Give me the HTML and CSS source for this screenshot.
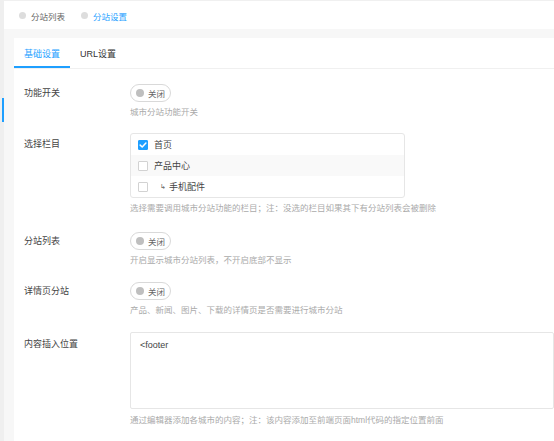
FILE: index.html
```html
<!DOCTYPE html>
<html lang="zh-CN">
<head>
<meta charset="utf-8">
<title>分站设置</title>
<link rel="stylesheet" href="styles.css">
</head>
<body>
<div class="page">
  <aside class="rail"><span class="rail-mark"></span></aside>
  <div class="main">
    <header class="crumbs">
      <span class="crumb"><i class="dot"></i>分站列表</span>
      <span class="crumb crumb-active"><i class="dot"></i>分站设置</span>
    </header>
    <div class="content">
      <section class="card">
        <nav class="tabs">
          <span class="tab tab-active">基础设置</span>
          <span class="tab">URL设置</span>
        </nav>
        <div class="form">
          <div class="item">
            <div class="label">功能开关</div>
            <div class="field">
              <span class="switch"><i class="knob"></i>关闭</span>
              <div class="help">城市分站功能开关</div>
            </div>
          </div>
          <div class="item item-list">
            <div class="label label-list">选择栏目</div>
            <div class="field">
              <div class="checklist">
                <div class="check-row"><span class="box box-on"><svg viewBox="0 0 10 10" width="10" height="10"><path d="M2.2 5.1 L4.2 7 L7.9 3" fill="none" stroke="#fff" stroke-width="1.5" stroke-linecap="round" stroke-linejoin="round"/></svg></span>首页</div>
                <div class="check-row check-row-alt"><span class="box"></span>产品中心</div>
                <div class="check-row"><span class="box"></span><span class="sub-arrow">↳</span>手机配件</div>
              </div>
              <div class="help">选择需要调用城市分站功能的栏目；注：没选的栏目如果其下有分站列表会被删除</div>
            </div>
          </div>
          <div class="item item-wide">
            <div class="label">分站列表</div>
            <div class="field">
              <span class="switch"><i class="knob"></i>关闭</span>
              <div class="help">开启显示城市分站列表，不开启底部不显示</div>
            </div>
          </div>
          <div class="item item-wide">
            <div class="label">详情页分站</div>
            <div class="field">
              <span class="switch"><i class="knob"></i>关闭</span>
              <div class="help">产品、新闻、图片、下载的详情页是否需要进行城市分站</div>
            </div>
          </div>
          <div class="item">
            <div class="label label-area">内容插入位置</div>
            <div class="field">
              <div class="textarea">&lt;footer</div>
              <div class="help help-area">通过编辑器添加各城市的内容；注：该内容添加至前端页面html代码的指定位置前面</div>
            </div>
          </div>
        </div>
      </section>
    </div>
  </div>
</div>
</body>
</html>
```

FILE: styles.css
```css
* { box-sizing: border-box; }
html, body {
  margin: 0;
  padding: 0;
  height: 100%;
  overflow: hidden;
}
body {
  font-family: "Liberation Sans", "Noto Sans CJK SC", sans-serif;
  font-size: 9px;
  color: #333;
  background: #f7f7f7;
}
.page {
  display: flex;
  height: 441px;
}
.rail {
  width: 4px;
  flex: none;
  background: #efefef;
  display: flex;
  flex-direction: column;
}
.rail-mark {
  display: block;
  width: 2px;
  height: 24px;
  margin: 98px 0 0 2px;
  background: #1e9fff;
}
.main {
  flex: 1;
  display: flex;
  flex-direction: column;
  min-width: 0;
}
.crumbs {
  height: 30px;
  background: #fff;
  border-top: 1px solid #f0f0f0;
  display: flex;
  align-items: center;
  padding: 1px 0 0 15px;
  gap: 16px;
}
.crumb {
  display: flex;
  align-items: center;
  gap: 5px;
  color: #666;
  font-size: 8.5px;
}
.crumb-active { color: #1e9fff; }
.dot {
  width: 7px;
  height: 7px;
  border-radius: 50%;
  background: #ddd;
}
.content {
  flex: 1;
  padding: 9px 0 0 10px;
}
.card {
  background: #fff;
  height: 100%;
}
.tabs {
  display: flex;
  height: 31px;
  border-bottom: 1px solid #f0f0f0;
}
.tab {
  height: 30px;
  padding: 2px 10px 0;
  line-height: 28px;
  font-size: 9px;
  color: #333;
}
.tab-active {
  color: #1e9fff;
  border-bottom: 2px solid #1e9fff;
}
.form {
  padding: 15px 0 0 10px;
}
.item {
  display: flex;
  margin-bottom: 14px;
}
.item-list { margin-bottom: 17px; }
.item-wide { margin-bottom: 15px; }
.label {
  width: 106px;
  flex: none;
  line-height: 18px;
  font-size: 9px;
  color: #444;
}
.label-list { padding-top: 2px; }
.label-area { padding-top: 3px; }
.field {
  flex: 1;
  min-width: 0;
}
.switch {
  display: inline-flex;
  align-items: center;
  height: 18px;
  width: 41px;
  border: 1px solid #d9d9d9;
  border-radius: 9px;
  padding-left: 5px;
  gap: 4px;
  color: #666;
  font-size: 8.5px;
}
.knob {
  width: 8px;
  height: 8px;
  border-radius: 50%;
  background: #bfbfbf;
}
.help {
  margin-top: 3px;
  line-height: 14px;
  font-size: 8.5px;
  color: #aaa;
  white-space: nowrap;
}
.help-area { margin-top: 4px; }
.checklist {
  width: 275px;
  border: 1px solid #e6e6e6;
  border-radius: 3px;
}
.check-row {
  height: 21px;
  display: flex;
  align-items: center;
  padding-left: 7px;
  font-size: 9px;
  color: #444;
}
.check-row-alt { background: #f9f9f9; }
.box {
  width: 10px;
  height: 10px;
  border: 1px solid #d2d2d2;
  border-radius: 1px;
  background: #fff;
  margin-right: 6px;
  display: flex;
}
.box-on {
  background: #1e9fff;
  border-color: #1e9fff;
}
.box-on svg { margin: -1px; }
.sub-arrow {
  font-family: "DejaVu Sans", sans-serif;
  font-size: 7px;
  color: #666;
  margin: 0 3px 0 6px;
}
.textarea {
  height: 77px;
  border: 1px solid #e6e6e6;
  border-radius: 2px;
  padding: 6px 9px;
  line-height: 12px;
  font-size: 9px;
  color: #444;
}
```
